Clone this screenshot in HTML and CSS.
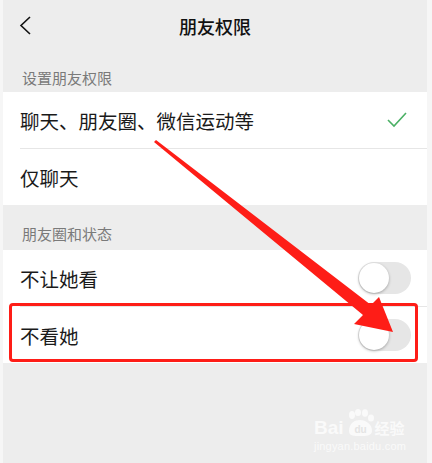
FILE: index.html
```html
<!DOCTYPE html>
<html lang="zh-CN">

<head>
    <meta charset="UTF-8">
    <meta name="viewport" content="width=device-width, initial-scale=1.0">
    <title>朋友权限</title>
    <link rel="stylesheet" href="styles.css">
</head>

<body>
    <div class="screen">
        <div class="page">
            <div class="nav">
                <svg class="back" width="14" height="22" viewBox="0 0 14 22">
                    <polyline points="11,2 2,10.5 11,19" fill="none" stroke="#111" stroke-width="1.6" />
                </svg>
                <div class="nav-title">朋友权限</div>
            </div>

            <div class="group-title first">设置朋友权限</div>
            <div class="cells">
                <div class="cell">
                    <span>聊天、朋友圈、微信运动等</span>
                    <svg class="check" width="22" height="18" viewBox="0 0 22 18">
                        <polyline points="2,9 8,15 20,2" fill="none" stroke="#4bb065" stroke-width="1.6" />
                    </svg>
                </div>
                <div class="cell">
                    <span>仅聊天</span>
                </div>
            </div>

            <div class="group-title">朋友圈和状态</div>
            <div class="cells">
                <div class="cell">
                    <span>不让她看</span>
                    <div class="switch"><div class="knob"></div></div>
                </div>
                <div class="cell">
                    <span>不看她</span>
                    <div class="switch"><div class="knob"></div></div>
                </div>
            </div>
        </div>

        <!-- annotations drawn over the screenshot -->
        <div class="highlight"></div>
        <svg class="arrow" width="432" height="463" viewBox="0 0 432 463">
            <polygon points="154,142 156,140 371,305 379,297 393,332 354,324 363,315" fill="#fe1d17" />
        </svg>

        <div class="mark">
            <div class="mark-top">
                <span class="bai">Bai</span>
                <svg class="paw" width="30" height="28" viewBox="0 0 30 28">
                    <ellipse cx="7" cy="6" rx="3" ry="4" fill="#fafafa" />
                    <ellipse cx="13" cy="3.5" rx="3" ry="3.5" fill="#fafafa" />
                    <ellipse cx="20" cy="4" rx="3" ry="3.8" fill="#fafafa" />
                    <ellipse cx="26" cy="9" rx="3" ry="3.6" fill="#fafafa" />
                    <path d="M4 22 C4 14 10 11 15 11 C21 11 27 15 27 22 C27 27 20 27 15 27 C9 27 4 27 4 22 Z" fill="#fafafa" />
                    <text x="15.5" y="24" text-anchor="middle" class="du">du</text>
                </svg>
                <span class="jy">经验</span>
            </div>
            <div class="mark-url">jingyan.baidu.com</div>
        </div>
    </div>
</body>

</html>
```

FILE: styles.css
```css
body {
    margin: 0;
    background-color: #f6f6f6;
    font-family: "Noto Sans CJK SC", "Noto Sans", sans-serif;
}

.screen {
    position: relative;
    width: 432px;
    height: 463px;
    overflow: hidden;
}

.page {
    margin-left: 3px;
    width: 424px;
    height: 463px;
    background-color: #ededed;
}

.nav {
    height: 50px;
    display: flex;
    align-items: center;
    position: relative;
}

.back {
    margin-left: 16px;
    margin-top: 2px;
}

.nav-title {
    position: absolute;
    left: 0;
    right: 0;
    top: 0;
    line-height: 52px;
    text-align: center;
    font-size: 18px;
    font-weight: 500;
    color: #111;
}

.group-title {
    padding: 21px 0 8px 19px;
    font-size: 15px;
    line-height: 16px;
    color: #7a7a7a;
}

.group-title.first {
    padding: 20px 0 6px 19px;
}

.cells {
    background-color: #fff;
}

.cell {
    height: 56px;
    display: flex;
    align-items: center;
    justify-content: space-between;
    padding: 0 16px 0 17px;
    font-size: 19.5px;
    color: #1a1a1a;
    position: relative;
}

.cell + .cell {
    border-top: 1px solid transparent;
}

.cell + .cell::before {
    content: "";
    position: absolute;
    top: -1px;
    left: 17px;
    right: 0;
    height: 1px;
    background-color: #e6e6e6;
}

.check {
    margin-right: 3px;
}

.switch {
    width: 53px;
    height: 32px;
    border-radius: 16px;
    background-color: #e6e6e6;
    display: flex;
    align-items: center;
    padding-left: 1px;
    box-sizing: border-box;
}

.knob {
    width: 30px;
    height: 30px;
    border-radius: 50%;
    background-color: #fff;
    box-shadow: 0 1px 3px rgba(0, 0, 0, 0.3);
}

.highlight {
    position: absolute;
    left: 9px;
    top: 303px;
    width: 403px;
    height: 53px;
    border: 3px solid #fe1d17;
    border-radius: 4px;
}

.arrow {
    position: absolute;
    left: 0;
    top: 0;
}

.mark {
    position: absolute;
    left: 314px;
    top: 408px;
    color: #fafafa;
    font-family: "Liberation Sans", sans-serif;
}

.mark-top {
    display: flex;
    align-items: flex-end;
    height: 29px;
}

.bai {
    font-size: 19px;
    font-weight: bold;
    line-height: 18px;
}

.paw {
    margin: 0 0 0 1px;
}

.du {
    font-family: "Liberation Sans", sans-serif;
    font-size: 10px;
    font-weight: bold;
    fill: #e4e4e4;
}

.jy {
    font-family: "Noto Sans CJK SC", sans-serif;
    font-size: 15px;
    font-weight: bold;
    line-height: 18px;
}

.mark-url {
    font-size: 11px;
    margin-top: 3px;
    letter-spacing: 0.2px;
}
```
